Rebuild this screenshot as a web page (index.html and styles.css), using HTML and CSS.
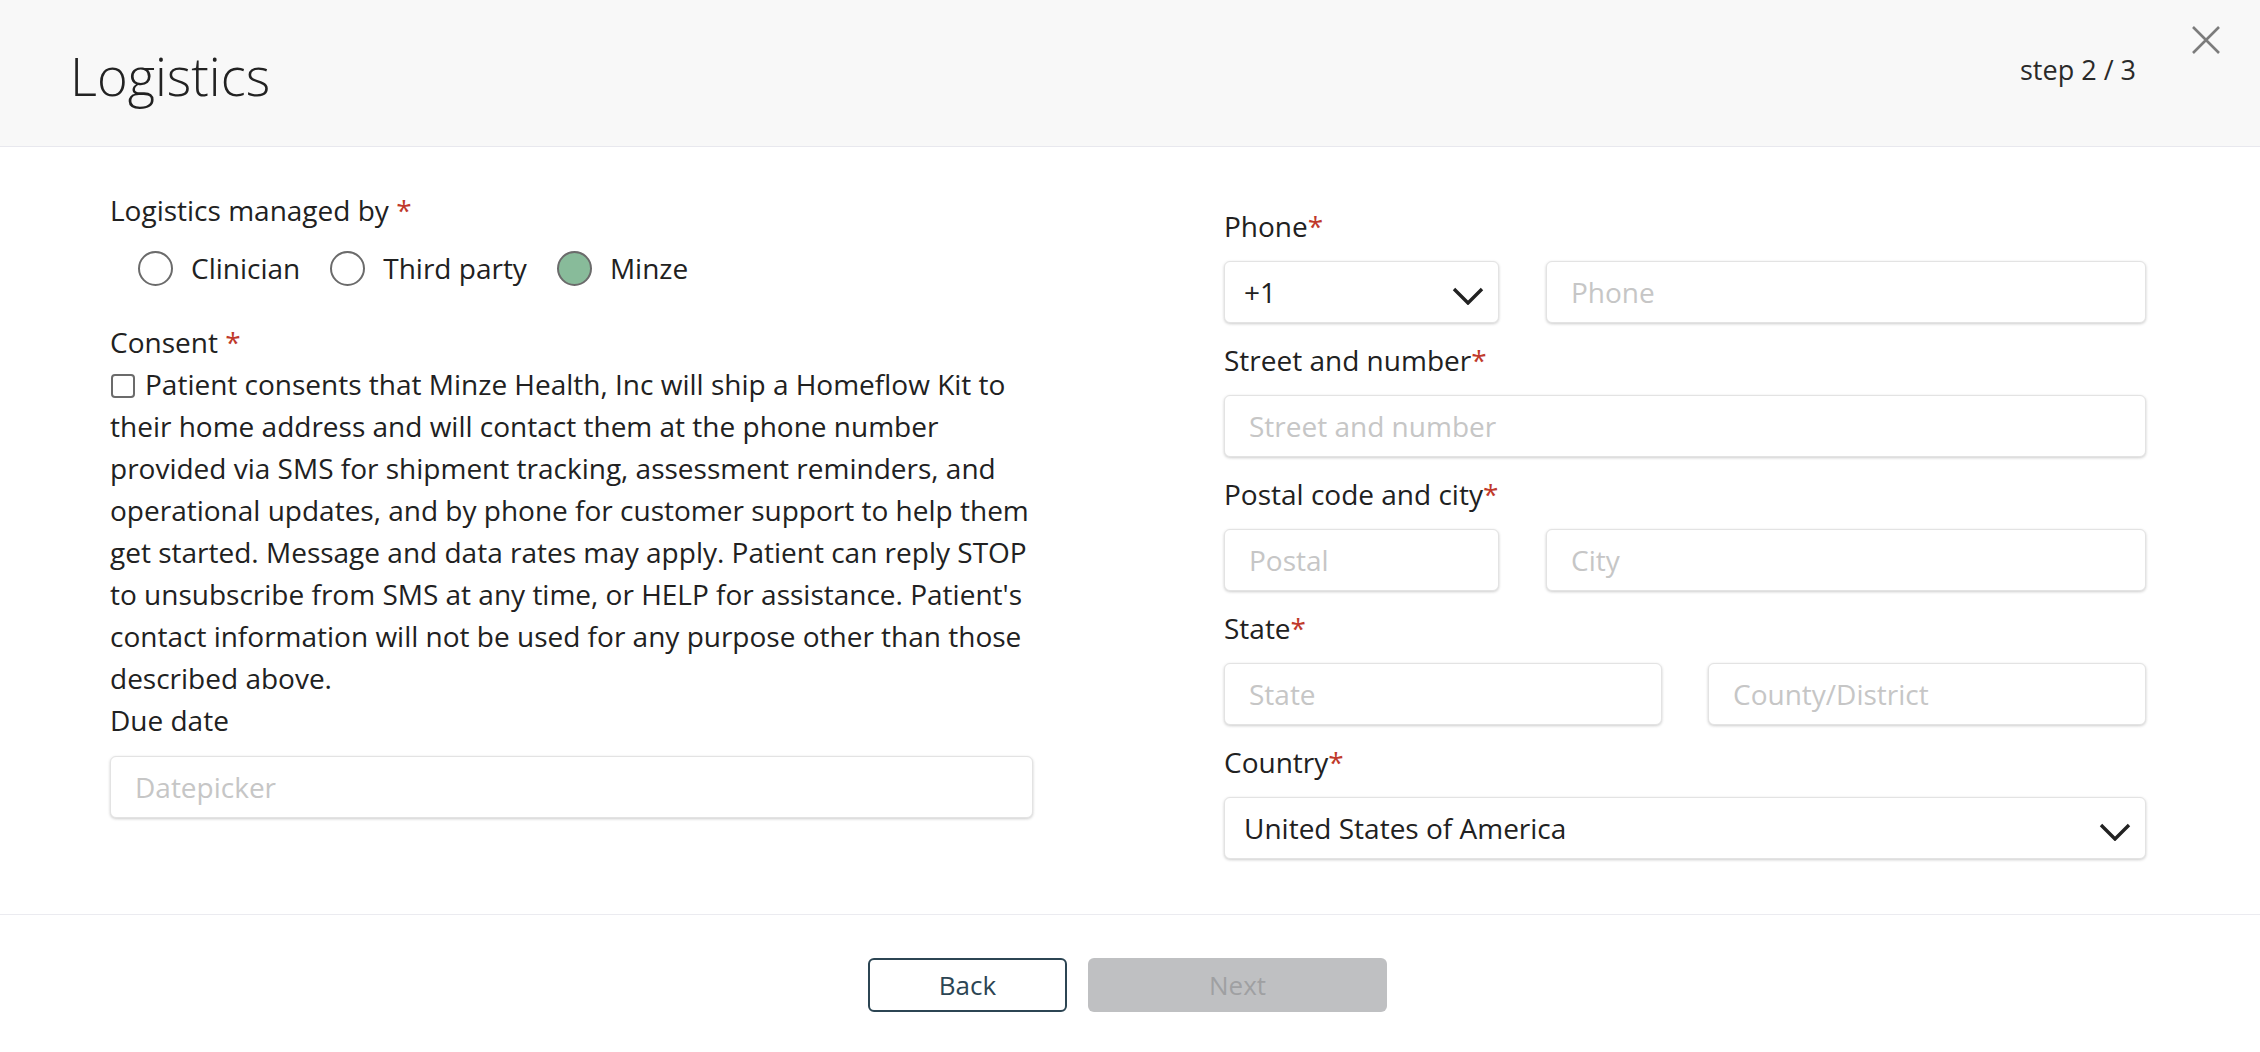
FILE: index.html
```html
<!DOCTYPE html>
<html lang="en">
<head>
    <meta charset="UTF-8">
    <meta name="viewport" content="width=device-width, initial-scale=1.0">
    <title>Logistics</title>
    <link rel="stylesheet" href="styles.css">
</head>
<body>
    <header class="modal-header">
        <h1 class="modal-title">Logistics</h1>
        <span class="step">step 2 / 3</span>
        <button class="close" type="button" aria-label="Close">
            <svg width="30" height="30" viewBox="0 0 30 30"><path d="M2 2 L28 28 M28 2 L2 28" stroke="#7c7c7c" stroke-width="2.6" fill="none"/></svg>
        </button>
    </header>

    <main class="modal-body">
        <div class="col">
            <div class="field-label">Logistics managed by <span class="req">*</span></div>
            <div class="radio-group">
                <label class="radio"><input type="radio" name="managed"><span>Clinician</span></label>
                <label class="radio"><input type="radio" name="managed"><span>Third party</span></label>
                <label class="radio"><input type="radio" name="managed" checked><span>Minze</span></label>
            </div>

            <div class="field-label consent-label">Consent <span class="req">*</span></div>
            <label class="consent"><input type="checkbox">Patient consents that Minze Health, Inc will ship a Homeflow Kit to their home address and will contact them at the phone number provided via SMS for shipment tracking, assessment reminders, and operational updates, and by phone for customer support to help them get started. Message and data rates may apply. Patient can reply STOP to unsubscribe from SMS at any time, or HELP for assistance. Patient's contact information will not be used for any purpose other than those described above.</label>

            <div class="field-label">Due date</div>
            <input class="text-input date-input" type="text" placeholder="Datepicker">
        </div>

        <div class="col col-right">
            <div class="form-group">
                <div class="field-label">Phone<span class="req">*</span></div>
                <div class="row row-phone">
                    <div class="select">
                        <select><option>+1</option></select>
                        <svg width="32" height="18" viewBox="0 0 32 18"><path d="M2 2 L16 16 L30 2" stroke="#222" stroke-width="3.4" fill="none"/></svg>
                    </div>
                    <input class="text-input" type="text" placeholder="Phone">
                </div>
            </div>
            <div class="form-group">
                <div class="field-label">Street and number<span class="req">*</span></div>
                <input class="text-input" type="text" placeholder="Street and number">
            </div>
            <div class="form-group">
                <div class="field-label">Postal code and city<span class="req">*</span></div>
                <div class="row row-phone">
                    <input class="text-input" type="text" placeholder="Postal">
                    <input class="text-input" type="text" placeholder="City">
                </div>
            </div>
            <div class="form-group">
                <div class="field-label">State<span class="req">*</span></div>
                <div class="row row-half">
                    <input class="text-input" type="text" placeholder="State">
                    <input class="text-input" type="text" placeholder="County/District">
                </div>
            </div>
            <div class="form-group">
                <div class="field-label">Country<span class="req">*</span></div>
                <div class="select">
                    <select><option>United States of America</option></select>
                    <svg width="32" height="18" viewBox="0 0 32 18"><path d="M2 2 L16 16 L30 2" stroke="#222" stroke-width="3.4" fill="none"/></svg>
                </div>
            </div>
        </div>
    </main>

    <footer class="modal-footer">
        <button class="btn btn-outline" type="button">Back</button>
        <button class="btn btn-disabled" type="button" disabled>Next</button>
    </footer>
</body>
</html>
```

FILE: styles.css
```css
* {
    box-sizing: border-box;
}
html, body {
    height: 100%;
}
body {
    margin: 0;
    font-family: "Open Sans", Arial, sans-serif;
    font-size: 28px;
    line-height: 42px;
    color: #212121;
    background: #fff;
    display: flex;
    flex-direction: column;
}

/* header */
.modal-header {
    flex-shrink: 0;
    height: 147px;
    background: #f8f8f8;
    border-bottom: 1px solid #e8e8ee;
    display: flex;
    align-items: flex-start;
    padding: 0 39px 0 70px;
}
.modal-title {
    flex: 1;
    margin: 40px 0 0;
    font-size: 52.5px;
    font-weight: 300;
    line-height: 1.362;
    color: #222;
}
.step {
    margin-top: 52px;
    font-size: 27px;
    line-height: 1.362;
    color: #2a2a2a;
}
.close {
    margin: 25px 0 0 55px;
    padding: 0;
    border: none;
    background: none;
    width: 30px;
    height: 30px;
    cursor: pointer;
}
.close svg {
    display: block;
}

/* body */
.modal-body {
    flex: 1;
    display: grid;
    grid-template-columns: 923px 922px;
    column-gap: 191px;
    align-content: start;
    padding: 42px 0 0 110px;
}
.col-right {
    padding-top: 16px;
}
.req {
    color: #c0392b;
}
.form-group {
    margin-bottom: 16px;
}
.form-group .field-label {
    margin-bottom: 14px;
}
.radio-group {
    display: flex;
    align-items: center;
    gap: 30px;
    height: 42px;
    margin: 16px 0 0 28px;
}
.radio {
    display: flex;
    align-items: center;
    gap: 18px;
}
.radio input {
    appearance: none;
    width: 35px;
    height: 35px;
    margin: 0;
    border: 2px solid #6b6b6b;
    border-radius: 50%;
    background: #fff;
}
.radio input:checked {
    background: #88bb9a;
}
.consent-label {
    margin-top: 32px;
}
.consent {
    display: block;
    margin-right: -8px;
}
.consent input {
    appearance: none;
    width: 24px;
    height: 24px;
    margin: 0 10px 0 1px;
    border: 2px solid #6b6b6b;
    border-radius: 4px;
    vertical-align: -3px;
    background: #fff;
}
.date-input {
    margin-top: 15px;
}

/* inputs */
.text-input,
.select select {
    display: block;
    width: 100%;
    height: 62px;
    padding: 0 24px;
    border: 1px solid #e3e3e3;
    border-radius: 6px;
    box-shadow: 0 1px 3px rgba(0, 0, 0, 0.2);
    background: #fff;
    font-family: inherit;
    font-size: 28px;
    color: #212121;
    outline: none;
}
.text-input::placeholder {
    color: #c6c6c6;
}
.select {
    position: relative;
}
.select select {
    appearance: none;
    padding: 0 60px 0 19px;
}
.select svg {
    position: absolute;
    right: 15px;
    top: 26px;
    pointer-events: none;
}
.row {
    display: grid;
}
.row-phone {
    grid-template-columns: 275px 1fr;
    column-gap: 47px;
}
.row-half {
    grid-template-columns: 1fr 1fr;
    column-gap: 46px;
}

/* footer */
.modal-footer {
    flex-shrink: 0;
    border-top: 1px solid #ebebf0;
    padding: 43px 5px 40px 0;
    display: flex;
    justify-content: center;
    gap: 21px;
}
.btn {
    height: 54px;
    border-radius: 6px;
    font-family: inherit;
    font-size: 26px;
}
.btn-outline {
    width: 199px;
    border: 2px solid #2c4553;
    background: #fff;
    color: #2c4553;
    cursor: pointer;
}
.btn-disabled {
    width: 299px;
    border: none;
    background: #bfc0c2;
    color: #9fa0a2;
}
```
